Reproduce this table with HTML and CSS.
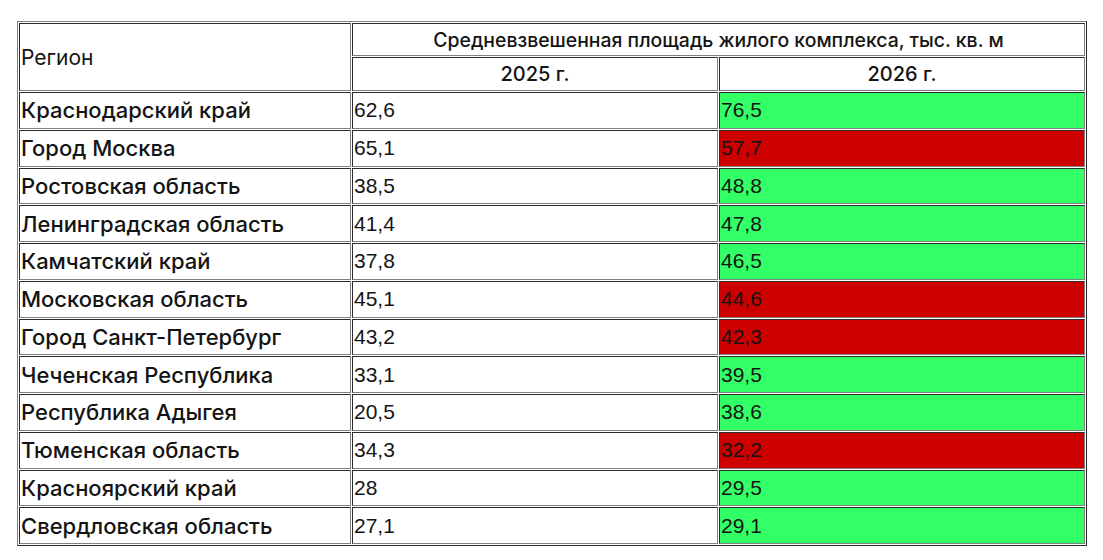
FILE: index.html
```html
<!DOCTYPE html>
<html lang="ru">
<head>
<meta charset="utf-8">
<title>Средневзвешенная площадь жилого комплекса</title>
<link rel="stylesheet" href="styles.css">
</head>
<body>
<div class="page">
<table class="grid">
  <colgroup>
    <col class="col-region">
    <col class="col-year">
    <col class="col-year">
  </colgroup>
  <thead>
    <tr class="head-1">
      <th class="h-region" rowspan="2">Регион</th>
      <th class="h-title" colspan="2">Средневзвешенная площадь жилого комплекса, тыс. кв. м</th>
    </tr>
    <tr class="head-2">
      <th class="h-year">2025 г.</th>
      <th class="h-year">2026 г.</th>
    </tr>
  </thead>
  <tbody>
    <tr><td class="region">Краснодарский край</td><td class="num">62,6</td><td class="num up">76,5</td></tr>
    <tr><td class="region">Город Москва</td><td class="num">65,1</td><td class="num down">57,7</td></tr>
    <tr><td class="region">Ростовская область</td><td class="num">38,5</td><td class="num up">48,8</td></tr>
    <tr><td class="region">Ленинградская область</td><td class="num">41,4</td><td class="num up">47,8</td></tr>
    <tr><td class="region">Камчатский край</td><td class="num">37,8</td><td class="num up">46,5</td></tr>
    <tr><td class="region">Московская область</td><td class="num">45,1</td><td class="num down">44,6</td></tr>
    <tr><td class="region">Город Санкт-Петербург</td><td class="num">43,2</td><td class="num down">42,3</td></tr>
    <tr><td class="region">Чеченская Республика</td><td class="num">33,1</td><td class="num up">39,5</td></tr>
    <tr><td class="region">Республика Адыгея</td><td class="num">20,5</td><td class="num up">38,6</td></tr>
    <tr><td class="region">Тюменская область</td><td class="num">34,3</td><td class="num down">32,2</td></tr>
    <tr><td class="region">Красноярский край</td><td class="num">28</td><td class="num up">29,5</td></tr>
    <tr><td class="region">Свердловская область</td><td class="num">27,1</td><td class="num up">29,1</td></tr>
  </tbody>
</table>
</div>
</body>
</html>
```

FILE: styles.css
```css
html, body {
  margin: 0;
  padding: 0;
  background: #ffffff;
}

.page {
  padding: 21px 0 0 17px;
}

.grid {
  width: 1070px;
  table-layout: fixed;
  border-collapse: separate;
  border-spacing: 1px;
  border: 1px outset #808080;
  color: #141414;
}

.col-region { width: 332px; }
.col-year { width: 366px; }

.grid th,
.grid td {
  border: 1px inset #808080;
  padding: 0 1px;
  vertical-align: middle;
  white-space: nowrap;
  overflow: hidden;
}

.head-1 { height: 33px; }
.head-2 { height: 34px; }
.grid tbody tr { height: 36.75px; }

.h-region {
  text-align: left;
  font-family: Inter, "Noto Sans", sans-serif;
  font-weight: 400;
  font-size: 21px;
}

.h-title {
  text-align: center;
  font-family: Inter, "Noto Sans", sans-serif;
  font-weight: 500;
  font-size: 19.4px;
}

.h-year {
  text-align: center;
  font-family: Inter, "Noto Sans", sans-serif;
  font-weight: 500;
  font-size: 20px;
}

.region {
  font-family: Inter, "Noto Sans", sans-serif;
  font-weight: 500;
  font-size: 22px;
}

.num {
  font-family: "Liberation Sans", Arial, sans-serif;
  font-size: 21px;
}

.up { background: #33ff66; }
.down { background: #cc0000; }
```
